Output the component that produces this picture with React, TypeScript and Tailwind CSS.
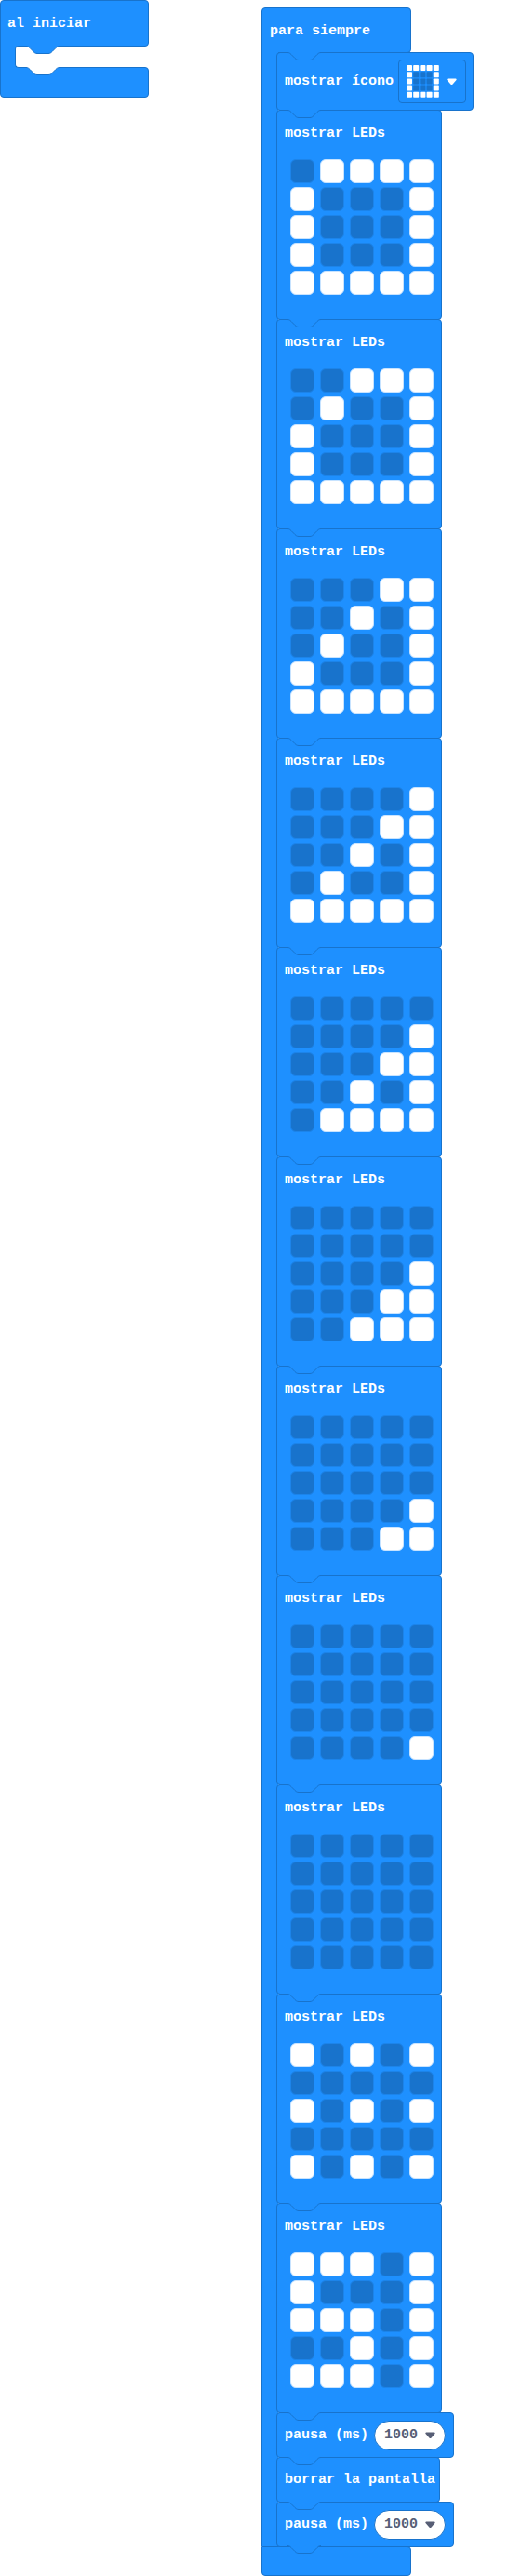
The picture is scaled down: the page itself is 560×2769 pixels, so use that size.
import React, { useState } from "react";

const TAB = "c2,0 3,1 4,2 l4,4 c1,1 2,2 4,2 h12 c2,0 3,-1 4,-2 l4,-4 c1,-1 2,-2 4,-2";

const FRAMES: string[][] = [
  [".####", "#...#", "#...#", "#...#", "#####"],
  ["..###", ".#..#", "#...#", "#...#", "#####"],
  ["...##", "..#.#", ".#..#", "#...#", "#####"],
  ["....#", "...##", "..#.#", ".#..#", "#####"],
  [".....", "....#", "...##", "..#.#", ".####"],
  [".....", ".....", "....#", "...##", "..###"],
  [".....", ".....", ".....", "....#", "...##"],
  [".....", ".....", ".....", ".....", "....#"],
  [".....", ".....", ".....", ".....", "....."],
  ["#.#.#", ".....", "#.#.#", ".....", "#.#.#"],
  ["###.#", "#...#", "###.#", "..#.#", "###.#"],
];

const SQUARE = ["#####", "#...#", "#...#", "#...#", "#####"];

/* Connector tab that hangs below the edge of a block. */
function Tab({ fill }: { fill: string }) {
  return (
    <svg className="pointer-events-none absolute -top-px left-[11px] z-10" width="36" height="10" viewBox="0 0 36 10" aria-hidden="true">
      <path d={`M0,0 v0.5 ${TAB} v-0.5 z`} fill={fill} />
      <path d={`M0,0.5 ${TAB}`} fill="none" stroke="#1873cc" />
    </svg>
  );
}

function Caret({ className }: { className: string }) {
  return (
    <svg className={className} width="11" height="8" viewBox="0 0 11 8" aria-hidden="true">
      <path d="M1.3,0.5 H9.7 C10.8,0.5 11,1.6 10.3,2.3 L6.6,6.5 C5.9,7.2 5.1,7.2 4.4,6.5 L0.7,2.3 C0,1.6 0.2,0.5 1.3,0.5 Z" fill="currentColor" />
    </svg>
  );
}

function Block({ className, children }: { className: string; children: React.ReactNode }) {
  return (
    <div className={`relative -mb-px rounded border border-[#1873cc] bg-[#1e90ff] pl-2 ${className}`}>
      <Tab fill="#1e90ff" />
      {children}
    </div>
  );
}

function Leds({ initial }: { initial: string[] }) {
  const [cells, setCells] = useState(initial.join("").split("").map((c) => c === "#"));
  const toggle = (n: number) => setCells(cells.map((on, i) => (i === n ? !on : on)));
  return (
    <div className="mt-[17px] ml-1.5 grid w-max grid-cols-5 gap-x-1.5 gap-y-1">
      {cells.map((on, i) => (
        <button
          key={i}
          type="button"
          aria-label={`LED ${(i % 5) + 1}, ${Math.floor(i / 5) + 1}`}
          aria-pressed={on}
          onClick={() => toggle(i)}
          className={
            on
              ? "size-[26px] rounded-md border border-[#c7e3ff] bg-white"
              : "size-[26px] rounded-md border border-[#1c84ea] bg-[#1873cc]"
          }
        />
      ))}
    </div>
  );
}

function Pause({ id }: { id: string }) {
  return (
    <Block className="flex h-[49px] w-[191px] items-center justify-between pr-2">
      <label htmlFor={id}>pausa (ms)</label>
      <div className="relative">
        <select id={id} defaultValue="1000" className="h-8 w-[77px] appearance-none rounded-full border border-[#1873cc] bg-white pl-2.5 text-[#575e75]">
          <option>100</option>
          <option>500</option>
          <option>1000</option>
          <option>2000</option>
        </select>
        <Caret className="pointer-events-none absolute top-3 right-[11px] text-[#575e75]" />
      </div>
    </Block>
  );
}

export default function App() {
  return (
    <main className="flex items-start gap-[121px] bg-white font-['Liberation_Mono',monospace] text-[15px] leading-5 font-bold whitespace-nowrap text-white">
      <section className="w-40 shrink-0">
        <div className="h-[50px] rounded-t rounded-br border border-[#1873cc] bg-[#1e90ff] pt-[15px] pl-[7px]">al iniciar</div>
        <div className="relative z-10 -my-px flex">
          <div className="w-4 border-l border-[#1873cc] bg-[#1e90ff]" />
          <div className="mr-1 flex-1 bg-gradient-to-r from-[#1e90ff] from-5% to-white to-5%">
            <div className="relative h-6 rounded-l border border-r-0 border-[#1873cc] bg-white">
              <Tab fill="#1e90ff" />
              <div className="absolute inset-x-0 -bottom-px">
                <Tab fill="#ffffff" />
              </div>
            </div>
          </div>
        </div>
        <div className="h-[33px] rounded-b rounded-tr border border-[#1873cc] bg-[#1e90ff]" />
      </section>

      <section className="pt-2">
        <div className="h-[49px] w-[161px] rounded-t rounded-br border border-[#1873cc] bg-[#1e90ff] pt-[15px] pl-2">para siempre</div>
        <div className="relative z-10 -mt-px flex">
          <div className="-mr-0.5 w-[18px] border-l border-[#1873cc] bg-[#1e90ff]" />
          <div>
            <Block className="flex h-[63px] w-[212px] items-center justify-between pr-[7px]">
              <span>mostrar ícono</span>
              <button type="button" aria-label="Elegir ícono" aria-haspopup="listbox" className="flex h-[47px] w-[73px] items-center gap-2 rounded border border-[#1873cc] pl-2">
                <svg width="35" height="35" viewBox="0 0 35 35" aria-hidden="true">
                  {SQUARE.flatMap((row, y) =>
                    row.split("").map((c, x) => (
                      <rect key={`${x}-${y}`} x={x * 7.2} y={y * 7.2} width="6" height="6" rx="0.8" fill={c === "#" ? "#ffffff" : "#1873cc"} />
                    ))
                  )}
                </svg>
                <Caret className="text-white" />
              </button>
            </Block>
            {FRAMES.map((frame, i) => (
              <Block key={i} className="h-[226px] w-[178px] pt-[15px]">
                <div>mostrar LEDs</div>
                <Leds initial={frame} />
              </Block>
            ))}
            <Pause id="pausa-1" />
            <Block className="flex h-[49px] w-44 items-center">borrar la pantalla</Block>
            <Pause id="pausa-2" />
            <div className="relative ml-px">
              <Tab fill="#1e90ff" />
            </div>
          </div>
        </div>
        <div className="h-8 w-[161px] rounded-b rounded-tr border border-[#1873cc] bg-[#1e90ff]" />
      </section>
    </main>
  );
}
